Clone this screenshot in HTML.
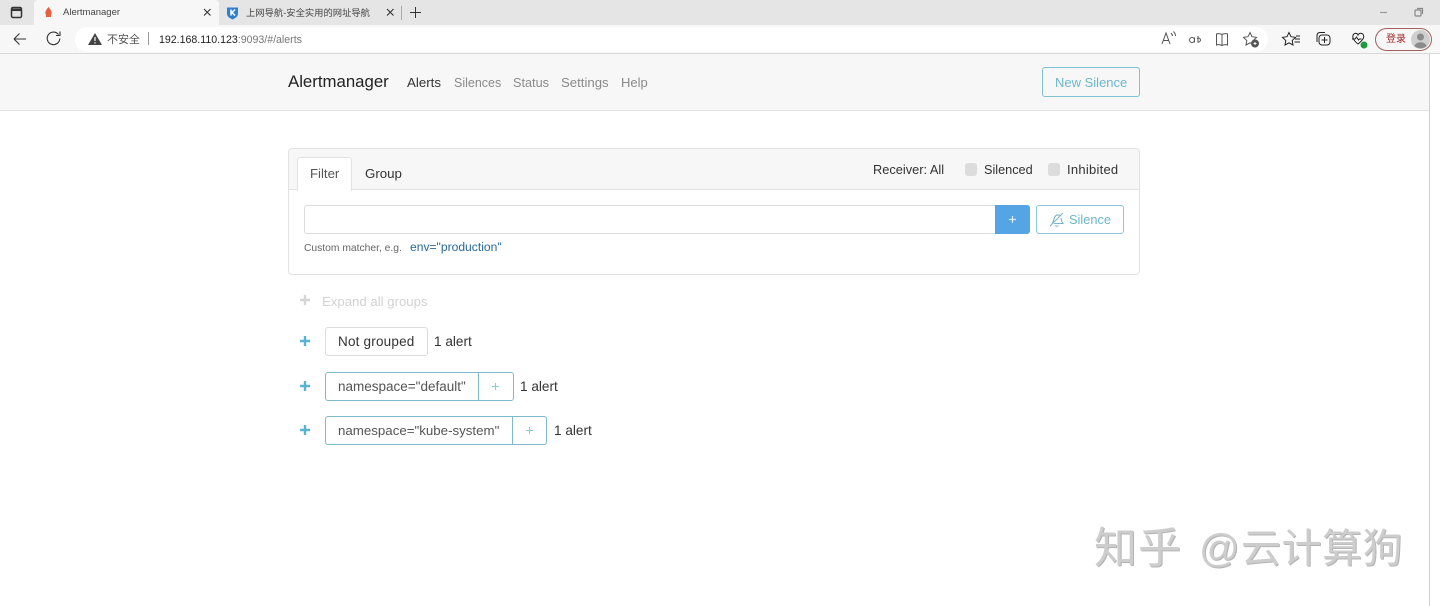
<!DOCTYPE html>
<html lang="zh"><head><meta charset="utf-8"><title>Alertmanager</title>
<style>
html,body{margin:0;padding:0;background:#fff}
body{width:1440px;height:606px;position:relative;overflow:hidden;font-family:"Liberation Sans","Noto Sans CJK SC",sans-serif;color:#212529}
.a{position:absolute;white-space:nowrap}
.box{position:absolute;box-sizing:border-box}
.t{font-size:14px;line-height:20px}
.w{position:absolute;white-space:nowrap;line-height:52px;color:#cdcdcd;text-shadow:1px 1px 0 #b4b4b4;top:523px}
svg{position:absolute;overflow:visible}
</style></head><body>

<!-- browser chrome -->
<div class="box" style="left:0;top:0;width:1440px;height:25px;background:#e5e5e5"></div>
<div class="box" style="left:34px;top:0;width:185px;height:25px;background:#f7f7f7;border-radius:4px 4px 0 0"></div>
<div class="box" style="left:0;top:25px;width:1440px;height:29px;background:#f7f7f7;border-bottom:1px solid #d9d9d9"></div>
<svg style="left:0;top:0" width="1440" height="54" fill="none" stroke="#333" stroke-width="1.2">
<rect x="11.5" y="7.5" width="10" height="10" rx="1.5" stroke-width="1.5"/><path d="M11.5 9.8h10" stroke-width="2.5"/>
<path d="M48.5 7c2 2.500 3.200 4 3.200 6a3.200 3.200 0 0 1-6.400 0c0-2 1.200-3.500 3.200-6z" fill="#e8613f" stroke="none"/><rect x="46" y="15" width="5" height="2" fill="#e8613f" stroke="none"/>
<path d="M204 9l6.500 6.500M210.500 9l-6.500 6.500M387 9l6.500 6.500M393.500 9l-6.500 6.500" stroke-width="1.100"/>
<path d="M227 7.500h11v6c0 3-2.500 4.500-5.500 6-3-1.500-5.500-3-5.500-6z" fill="#2f7fd1" stroke="none"/><path d="M231 9.500v6M235 9.500l-3 3 3 3" stroke="#fff" stroke-width="1.500"/>
<path d="M401.500 6v14" stroke="#aaa" stroke-width="1"/>
<path d="M410 12.500h11M415.500 7v11" stroke-width="1"/>
<path d="M1380 12.500h7" stroke="#999"/>
<rect x="1415" y="10" width="6" height="6" rx="1" stroke="#888"/><path d="M1417 8.500h5.500v5.500" stroke="#888"/>
<path d="M14 39h12M14 39l5.500-5.500M14 39l5.500 5.500" stroke-width="1.100"/>
<path d="M58.500 34.500a6.300 6.300 0 1 0 1.300 4M60 31.500v4h-4" stroke-width="1.100"/>
</svg>
<div class="box" style="left:75px;top:27px;width:1193px;height:25px;background:#fff;border-radius:13px"></div>
<svg style="left:88px;top:33px" width="14" height="12"><path d="M7 0l7 12H0z" fill="#444"/><path d="M7 4v4M7 9.300v1.200" stroke="#fff" stroke-width="1.200"/></svg>
<div class="a" style="left:107px;top:32px;font-size:11px;line-height:16px;color:#555">不安全</div>
<div class="box" style="left:148px;top:32px;width:1px;height:13px;background:#999"></div>
<div class="a" style="left:159px;top:32px;font-size:10.6px;line-height:16px;color:#222">192.168.110.123<span style="color:#777">:9093/#/alerts</span></div>
<div class="a" style="left:63px;top:5px;font-size:9.500px;line-height:16px;color:#444">Alertmanager</div>
<div class="a" style="left:246px;top:5px;font-size:9.300px;line-height:16px;color:#444">上网导航-安全实用的网址导航</div>
<svg style="left:1140px;top:25px" width="300" height="30" fill="none" stroke="#555" stroke-width="1">
<path d="M22 19l4-11 4 11M23.500 15.500h5M31 8c1 1 1.500 2 1.500 3M33.500 6.500c1.500 1.500 2 3 2 4.500"/>
<circle cx="52" cy="15" r="2.500"/><path d="M54.500 12.500v5M58 11v6M57 13.500c2-1 3.500 0 3.500 1.500s-1.500 2.500-3 2"/>
<path d="M82 9.500c-2-1-4-1-5.500-.5v11c1.500-.5 3.500-.5 5.500.5 2-1 4-1 5.500-.5v-11c-1.500-.5-3.500-.5-5.500.5zM82 9.500v11"/>
<path d="M110 7.500l2 4.200 4.500.6-3.300 3.200.8 4.500-4-2.200-4 2.200.8-4.500-3.300-3.200 4.500-.6z"/><circle cx="115" cy="18.500" r="3.500" fill="#555"/><path d="M113.500 18.500h3M115 17v3" stroke="#fff"/>
<path d="M149 7.500l2 4.200 4.500.6-3.300 3.200.8 4.500-4-2.200-4 2.200.8-4.500-3.300-3.200 4.500-.6zM155 14h5M154.500 17h5.500M156 11h4" stroke="#222"/>
<rect x="179" y="10" width="11" height="10" rx="3" stroke="#222"/><path d="M184.500 12v6M181.500 15h6M177 17V11c0-2 1-3.500 3-3.500h5" stroke="#222"/>
<path d="M213 13c-1-5 4-6 5-3 1-3 7-2 5.500 3-1 2-3 4-5.500 6-2-1.500-4-3.500-5-6zM212 14h3l1.500-2 2 3 1-1h2" stroke="#222"/><circle cx="224" cy="20" r="3.500" fill="#1f9b3d" stroke="none"/>
</svg>
<div class="box" style="left:1375px;top:28px;width:57px;height:23px;border:1.500px solid #a2615e;border-radius:12px"></div>
<div class="a" style="left:1386px;top:32px;font-size:10px;line-height:16px;color:#a3282b">登录</div>
<div class="box" style="left:1411px;top:30px;width:19px;height:19px;border-radius:50%;background:#cfcfcf"></div>
<svg style="left:1411px;top:30px" width="19" height="19"><circle cx="9.500" cy="7" r="3.500" fill="#8b8b8b"/><path d="M3.500 16c1-5 11-5 12 0-3 3-9 3-12 0z" fill="#8b8b8b"/></svg>

<!-- navbar -->
<div class="box" style="left:0;top:54px;width:1429px;height:57px;background:#f7f7f7;border-bottom:1px solid #e3e3e3"></div>
<div class="box" style="left:1429px;top:54px;width:1px;height:552px;background:#cfcfcf"></div>
<div class="a" style="left:288px;top:70px;font-size:16.800px;line-height:23px;color:#222">Alertmanager</div>
<div class="a t" style="left:407px;top:73px;font-size:13.300px;color:#333">Alerts</div>
<div class="a t" style="left:454px;top:72.500px;font-size:12.500px;color:#8a8a8a">Silences</div>
<div class="a t" style="left:513px;top:72.500px;font-size:12.700px;color:#8a8a8a">Status</div>
<div class="a t" style="left:561px;top:72.500px;font-size:13.200px;color:#8a8a8a">Settings</div>
<div class="a t" style="left:621px;top:72.500px;font-size:13.000px;color:#8a8a8a">Help</div>
<div class="box" style="left:1042px;top:67px;width:98px;height:30px;border:1px solid #7fc0d2;border-radius:3px"></div>
<div class="a t" style="left:1055px;top:72.500px;font-size:13px;color:#6cb7cd">New Silence</div>

<!-- filter card -->
<div class="box" style="left:288px;top:148px;width:852px;height:127px;border:1px solid #e2e2e2;border-radius:4px"></div>
<div class="box" style="left:289px;top:149px;width:850px;height:41px;background:#f7f7f7;border-bottom:1px solid #e2e2e2;border-radius:3px 3px 0 0"></div>
<div class="box" style="left:297px;top:157px;width:55px;height:34px;background:#fff;border:1px solid #e2e2e2;border-bottom:0;border-radius:3px 3px 0 0"></div>
<div class="a t" style="left:310px;top:163.500px;font-size:13.200px;color:#555">Filter</div>
<div class="a t" style="left:365px;top:163.500px;font-size:13.300px;color:#333">Group</div>
<div class="a t" style="left:873px;top:159.500px;font-size:12.800px;color:#333">Receiver: All</div>
<div class="box" style="left:965px;top:163px;width:12px;height:13px;background:#dcdcdc;border-radius:3px"></div>
<div class="a t" style="left:984px;top:159.500px;font-size:12.700px;color:#333">Silenced</div>
<div class="box" style="left:1048px;top:163px;width:12px;height:13px;background:#dcdcdc;border-radius:3px"></div>
<div class="a t" style="left:1067px;top:159.500px;font-size:13px;letter-spacing:.25px;color:#333">Inhibited</div>
<div class="box" style="left:304px;top:205px;width:692px;height:29px;border:1px solid #dcdcdc;border-radius:3px 0 0 3px"></div>
<div class="box" style="left:995px;top:205px;width:35px;height:29px;background:#55a4e4;border-radius:0 3px 3px 0"></div>
<svg style="left:1009px;top:216px" width="7" height="7"><path d="M3.500 0v7M0 3.500h7" stroke="#dcecf9" stroke-width="1.200"/></svg>
<div class="box" style="left:1036px;top:205px;width:88px;height:29px;border:1px solid #8cc8d8;border-radius:3px"></div>
<svg style="left:1049px;top:212px" width="15" height="15" fill="none" stroke="#7fb4c5" stroke-width="1.100"><path d="M1 14L14 1M3 11.500c2-2 1.500-5 3-7 1.500-2 4-2 5.500-.5M12 6c.5 2 .5 4 2 5.500H5M6 13.500c1 1 2.500 1 3.500 0"/></svg>
<div class="a t" style="left:1069px;top:209.500px;font-size:12.800px;color:#6cb7cd">Silence</div>
<div class="a" style="left:304px;top:240.500px;font-size:10.300px;line-height:16px;color:#666">Custom matcher, e.g.</div>
<div class="a" style="left:410px;top:239px;font-size:12.100px;line-height:17px;color:#27689c">env="production"</div>

<!-- groups -->
<svg style="left:300px;top:295px" width="10" height="10"><path d="M5 0v10M0 5h10" stroke="#d5d5d5" stroke-width="2.400"/></svg>
<div class="a t" style="left:322px;top:291.500px;font-size:13.200px;color:#d2d2d2">Expand all groups</div>

<svg style="left:300px;top:336px" width="10" height="10"><path d="M5 0v10M0 5h10" stroke="#5bb3d2" stroke-width="2.400"/></svg>
<div class="box" style="left:325px;top:327px;width:103px;height:29px;border:1px solid #dcdcdc;border-radius:3px"></div>
<div class="a t" style="left:338px;top:331.500px;font-size:13.500px;letter-spacing:.2px;color:#333">Not grouped</div>
<div class="a t" style="left:434px;top:331.500px;font-size:13.600px;color:#333">1 alert</div>

<svg style="left:300px;top:381px" width="10" height="10"><path d="M5 0v10M0 5h10" stroke="#5bb3d2" stroke-width="2.400"/></svg>
<div class="box" style="left:325px;top:372px;width:189px;height:29px;border:1px solid #7fb9cc;border-radius:3px"></div>
<div class="box" style="left:478px;top:372px;width:1px;height:29px;background:#7fb9cc"></div>
<div class="a t" style="left:338px;top:376.500px;font-size:13.500px;color:#555">namespace="default"</div>
<svg style="left:492px;top:383px" width="7" height="7"><path d="M3.500 0v7M0 3.500h7" stroke="#8cc8d8"/></svg>
<div class="a t" style="left:520px;top:376.500px;font-size:13.600px;color:#333">1 alert</div>

<svg style="left:300px;top:425px" width="10" height="10"><path d="M5 0v10M0 5h10" stroke="#5bb3d2" stroke-width="2.400"/></svg>
<div class="box" style="left:325px;top:416px;width:222px;height:29px;border:1px solid #7fb9cc;border-radius:3px"></div>
<div class="box" style="left:512px;top:416px;width:1px;height:29px;background:#7fb9cc"></div>
<div class="a t" style="left:338px;top:420.500px;font-size:13.300px;color:#555">namespace="kube-system"</div>
<svg style="left:526px;top:427px" width="7" height="7"><path d="M3.500 0v7M0 3.500h7" stroke="#8cc8d8"/></svg>
<div class="a t" style="left:554px;top:420.500px;font-size:13.600px;color:#333">1 alert</div>

<!-- watermark -->
<div class="w" style="left:1094px;font-size:43px;letter-spacing:1px">知乎</div>
<div class="w" style="left:1199px;font-size:40px">@</div>
<div class="w" style="left:1241px;font-size:40px;letter-spacing:.5px">云计算狗</div>
</body></html>
